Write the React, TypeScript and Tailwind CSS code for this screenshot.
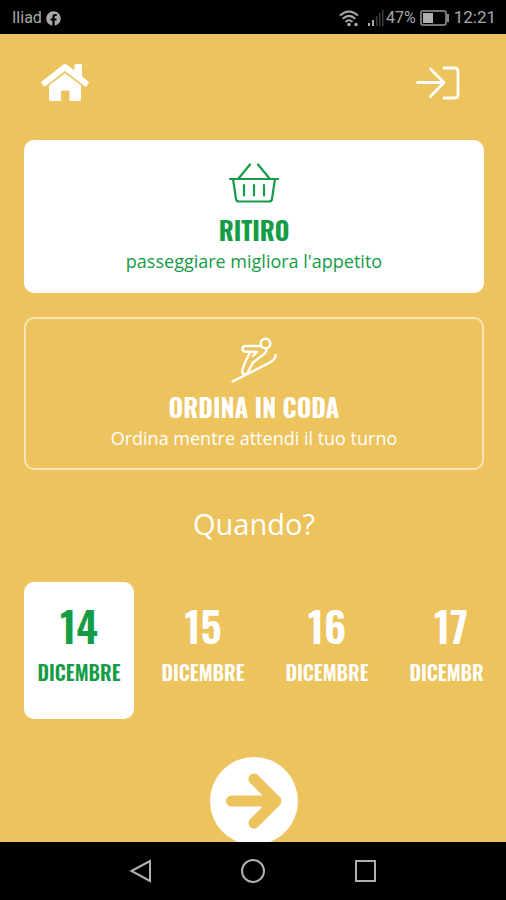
import React, { useState } from "react";
import { FaFacebook } from "react-icons/fa";

const dates = [
  { day: "14", month: "DICEMBRE" },
  { day: "15", month: "DICEMBRE" },
  { day: "16", month: "DICEMBRE" },
  { day: "17", month: "DICEMBRE" },
];

const HomeIcon = () => (
  <svg viewBox="0 0 48 38" className="h-[38px] w-12" fill="currentColor" aria-hidden="true">
    <path d="M22 .8Q24-.8 26 .8L33.500 6.500V1.500Q33.500 0 35 0H39.500Q41 0 41 1.500V12.500L47.300 17.600Q48.300 18.500 47.500 19.600L45.700 22Q44.800 23 43.700 22.200L24 7 4.300 22.200Q3.200 23 2.300 22L.5 19.600Q-.3 18.500.7 17.600Z" />
    <path d="M8 21.500 24 9.200 40 21.500V35.500Q40 37 38.500 37H28.500V27.500Q28.500 26.500 27.500 26.500H21Q20 26.500 20 27.500V37H9.500Q8 37 8 35.500Z" />
  </svg>
);

const LoginIcon = () => (
  <svg viewBox="0 0 44 34" className="h-[34px] w-11" fill="none" stroke="currentColor" strokeWidth="2.800" strokeLinecap="round" strokeLinejoin="round" aria-hidden="true">
    <path d="M1.500 16.500H28M14.500 3 28 16.500 14.500 30.500M28 2H38.500Q42 2 42 5.500V28.500Q42 32 38.500 32H28" />
  </svg>
);

const BasketIcon = () => (
  <svg viewBox="0 0 50 40" className="h-10 w-[50px]" fill="none" stroke="currentColor" strokeWidth="2.200" strokeLinecap="round" strokeLinejoin="round" aria-hidden="true">
    <path d="M1 16H49M4 16 7 36Q7.400 38.500 10 38.500H40Q42.600 38.500 43 36L46 16M9.500 15.500 21 1.500M40.500 15.500 29 1.500" />
    <path d="M15 22V32.500M25 22V32.500M35 22V32.500" />
  </svg>
);

const SkiIcon = () => (
  <svg viewBox="0 0 46 46" className="h-[46px] w-[46px]" fill="none" stroke="currentColor" strokeWidth="2.400" strokeLinecap="round" strokeLinejoin="round" aria-hidden="true">
    <circle cx="34.500" cy="6.500" r="4.800" />
    <path d="M1.500 44.500 37 26.500Q45 22.500 44.500 18" />
    <path d="M30 9H14.500Q11.500 9 11.500 11.700 11.500 14.500 14.500 14.700H26L22 19" />
    <path d="M19 15.500Q14.500 23 11.500 32.500Q10.500 36 12.700 37Q15.500 38 17 35L22 25.500 33 17Q36.500 14 35 11.500" />
  </svg>
);

const NextIcon = () => (
  <svg viewBox="0 0 88 88" className="h-[88px] w-[88px]" aria-hidden="true">
    <circle cx="44" cy="44" r="44" fill="#fff" />
    <path d="M21.500 44H65M44 22 66 44 44 66" fill="none" stroke="#ecc35c" strokeWidth="11" strokeLinecap="round" strokeLinejoin="round" />
    <path d="M52 36 64 44 52 52Z" fill="#ecc35c" />
  </svg>
);

const WifiIcon = () => (
  <svg viewBox="0 0 20 17" className="h-[17px] w-5" fill="none" stroke="currentColor" strokeWidth="2" aria-hidden="true">
    <path d="M1 5.500Q10-2.500 19 5.500M3.700 8.800Q10 3 16.300 8.800M6.500 12Q10 8.500 13.500 12" />
    <circle cx="10" cy="14.500" r="1.800" fill="currentColor" stroke="none" />
    <circle cx="17" cy="14.500" r="1.800" fill="currentColor" stroke="none" />
  </svg>
);

const SignalIcon = () => (
  <svg viewBox="0 0 17 16" className="h-4 w-[17px]" aria-hidden="true">
    <path d="M1 13H3V16H1ZM5 10H7V16H5Z" fill="#aaa" />
    <path d="M9 6H10.500V16H9ZM12 3H13.500V16H12ZM15 0H16.500V16H15Z" fill="#3c3c3c" />
  </svg>
);

const BatteryIcon = () => (
  <svg viewBox="0 0 30 16" className="h-4 w-[30px]" aria-hidden="true">
    <rect x="1" y="1" width="25" height="14" rx="2" fill="none" stroke="#757575" strokeWidth="2" />
    <path d="M3 3H13V13H3Z" fill="#b0b0b0" />
    <path d="M27 4H29V12H27Z" fill="#858585" />
  </svg>
);

const App = () => {
  const [mode, setMode] = useState("ritiro");
  const [selected, setSelected] = useState("14");

  const options = [
    { id: "ritiro", title: "RITIRO", text: "passeggiare migliora l'appetito", icon: <BasketIcon /> },
    { id: "coda", title: "ORDINA IN CODA", text: "Ordina mentre attendi il tuo turno", icon: <SkiIcon /> },
  ];

  return (
    <div className="flex h-screen w-full flex-col overflow-hidden bg-[#ecc35c] font-['Open_Sans',sans-serif] text-white">
      {/* Status bar */}
      <div className="flex h-[34px] shrink-0 items-center justify-between bg-black pt-0.5 pr-2.5 pl-3 font-[Roboto,sans-serif] text-base text-[#a8a8a8]">
        <div className="flex items-center gap-1">
          <span>Iliad</span>
          <FaFacebook size={15} />
        </div>
        <div className="flex items-center">
          <WifiIcon />
          <span className="ml-2 flex items-center gap-0.5">
            <SignalIcon />
            <span>47%</span>
          </span>
          <span className="ml-1 flex items-center gap-1">
            <BatteryIcon />
            <span className="text-[17px]">12:21</span>
          </span>
        </div>
      </div>

      <main className="flex min-h-0 flex-1 flex-col overflow-hidden pr-[22px] pl-6">
        <header className="flex h-[106px] shrink-0 items-center justify-between pr-6 pb-2 pl-[17px]">
          <button type="button" aria-label="Home">
            <HomeIcon />
          </button>
          <button type="button" aria-label="Accedi">
            <LoginIcon />
          </button>
        </header>

        <div className="flex shrink-0 flex-col gap-6">
          {options.map((option) => (
            <button
              key={option.id}
              type="button"
              onClick={() => setMode(option.id)}
              className={
                mode === option.id
                  ? "flex h-[153px] flex-col items-center rounded-[10px] border-2 border-white bg-white pt-[18px] text-[#149c46]"
                  : "flex h-[153px] flex-col items-center rounded-[10px] border-2 border-[#f8e5b5] pt-[18px] text-white"
              }
            >
              <span className="flex h-[46px] items-center">{option.icon}</span>
              <span className="mt-2 font-[Oswald,sans-serif] text-[25px] leading-8 font-bold">
                {option.title}
              </span>
              <span className="text-lg leading-[30px]">{option.text}</span>
            </button>
          ))}
        </div>

        <h2 className="mt-8 shrink-0 text-center text-[29px] leading-[44px] font-medium">Quando?</h2>

        <div className="mt-9 flex shrink-0 gap-3.5 overflow-hidden">
          {dates.map((date) => (
            <button
              key={date.day}
              type="button"
              onClick={() => setSelected(date.day)}
              className={
                selected === date.day
                  ? "flex h-[137px] w-[110px] shrink-0 flex-col items-center rounded-[10px] bg-white pt-4 font-[Oswald,sans-serif] font-semibold text-[#149c46]"
                  : "flex h-[137px] w-[110px] shrink-0 flex-col items-center rounded-[10px] pt-4 font-[Oswald,sans-serif] font-semibold text-white"
              }
            >
              <span className="text-[42px] leading-[54px]">{date.day}</span>
              <span className="mt-1.5 text-xl leading-7">{date.month}</span>
            </button>
          ))}
        </div>

        <button type="button" aria-label="Avanti" className="mt-[38px] shrink-0 self-center">
          <NextIcon />
        </button>
      </main>

      {/* Android navigation */}
      <nav className="flex h-[58px] shrink-0 items-center justify-center gap-[88px] bg-black text-[#b0b0b0]">
        <button type="button" aria-label="Indietro">
          <svg viewBox="0 0 24 26" className="h-[26px] w-6" fill="none" stroke="currentColor" strokeWidth="2">
            <path d="M2.500 13 21 3V23Z" />
          </svg>
        </button>
        <button type="button" aria-label="Schermata principale">
          <svg viewBox="0 0 24 26" className="h-[26px] w-6" fill="none" stroke="currentColor" strokeWidth="2">
            <circle cx="12" cy="13" r="11" />
          </svg>
        </button>
        <button type="button" aria-label="App recenti">
          <svg viewBox="0 0 24 26" className="h-[26px] w-6" fill="none" stroke="currentColor" strokeWidth="2">
            <path d="M3 3H22V23H3Z" />
          </svg>
        </button>
      </nav>
    </div>
  );
};

export default App;
